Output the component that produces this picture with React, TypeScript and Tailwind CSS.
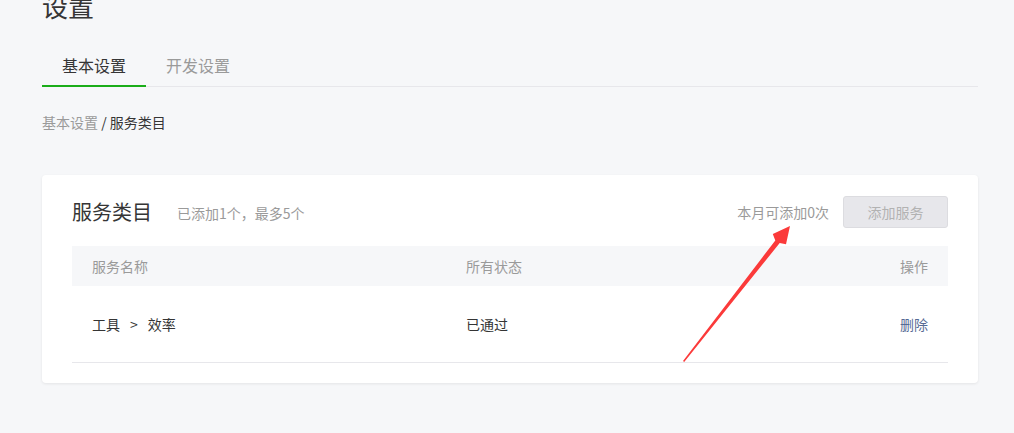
import React from 'react';

// Row data for the service category table
const services = [
  { name: ['工具', '效率'], status: '已通过' },
];

// Red annotation arrow drawn over the page
function Arrow() {
  return (
    <svg
      className="absolute left-0 top-0 pointer-events-none"
      width={1014}
      height={433}
      viewBox="0 0 1014 433"
    >
      <polygon
        points="683,361 775.3,240.4 772.8,234 790,226 786,244.3 779.7,243 684.2,362"
        fill="#fb3a3a"
      />
    </svg>
  );
}

export default function App() {
  return (
    <div className="relative w-[1014px] h-[433px] overflow-hidden bg-[#f6f7f9] font-['Noto_Sans_CJK_SC','Noto_Sans',sans-serif] text-[#353535]">
      <div className="pl-[42px] pr-[36px]">
        {/* Page title, scrolled partly out of view */}
        <h1 className="-mt-[7px] text-[26px] leading-[26px] font-normal">设置</h1>

        {/* Tabs */}
        <div className="mt-[35px] flex border-b border-[#e7e7eb]">
          <div className="-mb-px px-5 pb-[8px] border-b-2 border-[#1aad19] text-[16px] leading-[23px] text-[#353535]">
            基本设置
          </div>
          <div className="-mb-px px-5 pb-[8px] border-b-2 border-transparent text-[16px] leading-[23px] text-[#9a9a9a]">
            开发设置
          </div>
        </div>

        {/* Breadcrumb */}
        <div className="mt-[25px] text-[14px] leading-[20px]">
          <span className="text-[#9a9a9a]">基本设置</span>
          <span className="text-[#353535]"> / 服务类目</span>
        </div>

        {/* Card */}
        <div className="mt-[43px] bg-white rounded-[4px] shadow-[0_1px_3px_rgba(0,0,0,0.08)] px-[30px] pt-[21px] pb-[20px]">
          <div className="flex items-center h-[32px]">
            <h2 className="text-[20px] leading-[28px] font-normal text-[#353535]">服务类目</h2>
            <span className="ml-[25px] mt-[2px] text-[14px] leading-[20px] text-[#9a9a9a]">已添加1个，最多5个</span>
            <span className="ml-auto text-[14px] leading-[20px] text-[#9a9a9a]">本月可添加0次</span>
            <button
              disabled
              className="ml-[14px] w-[105px] h-[32px] rounded-[3px] border border-[#dcdce0] bg-[#e7e7eb] text-[14px] text-[#b2b2b2]"
            >
              添加服务
            </button>
          </div>

          {/* Table */}
          <div className="mt-[18px]">
            <div className="flex items-center h-[40px] bg-[#f6f7f9] text-[14px] text-[#9a9a9a]">
              <div className="w-[394px] pl-5">服务名称</div>
              <div className="flex-1">所有状态</div>
              <div className="pr-5 text-right">操作</div>
            </div>
            {services.map((s, i) => (
              <div key={i} className="flex items-center h-[77px] border-b border-[#e7e7eb] text-[14px] text-[#353535]">
                <div className="w-[394px] pl-5">
                  {s.name[0]}
                  <span className="mx-[10px]">&gt;</span>
                  {s.name[1]}
                </div>
                <div className="flex-1">{s.status}</div>
                <div className="pr-5 text-right text-[#576b95]">删除</div>
              </div>
            ))}
          </div>
        </div>
      </div>
      <Arrow />
    </div>
  );
}
